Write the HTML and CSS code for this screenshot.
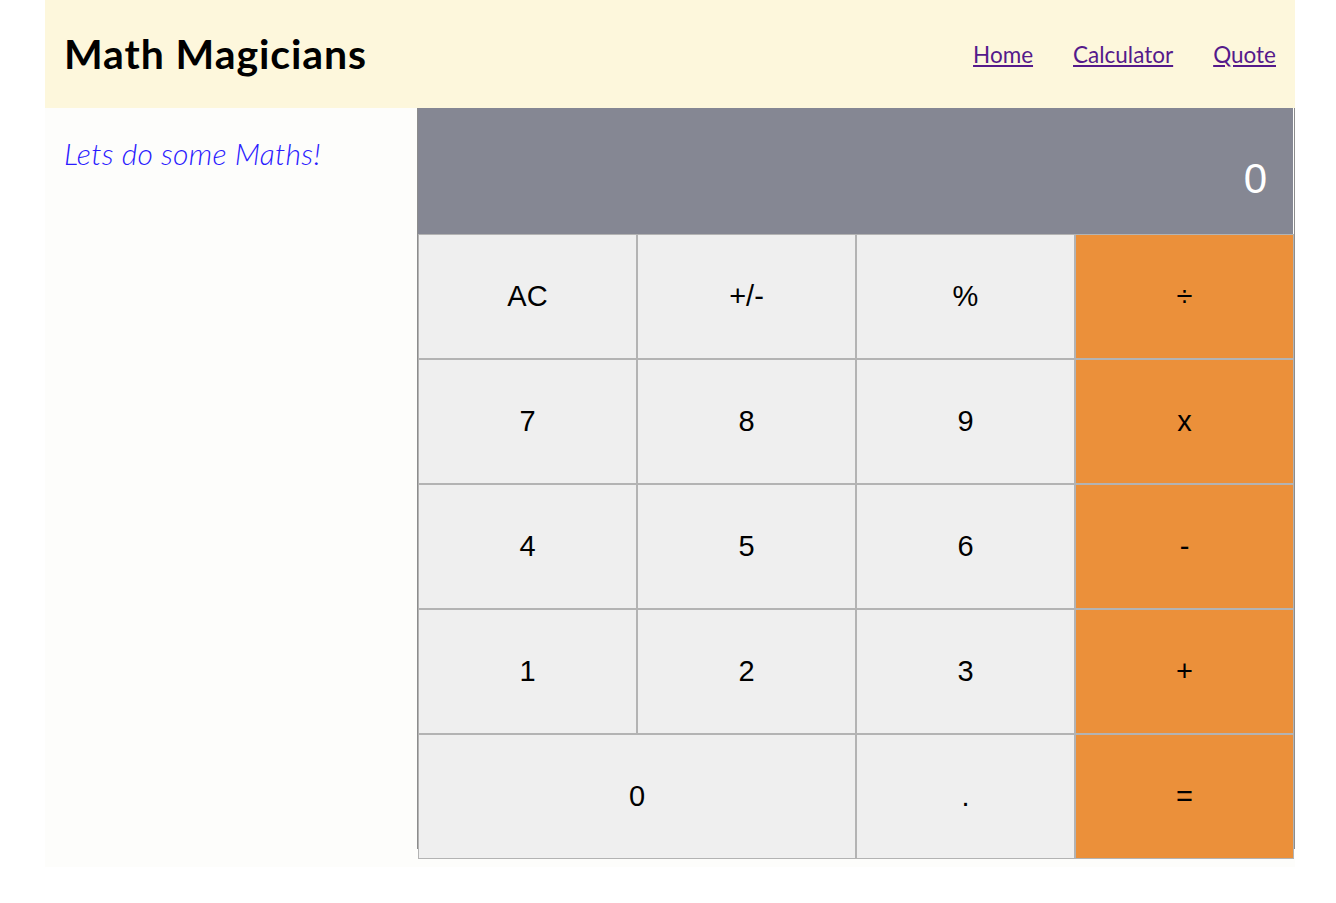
FILE: index.html
```html
<!DOCTYPE html>
<html lang="en">
<head>
<meta charset="utf-8">
<title>Math Magicians</title>
<link rel="stylesheet" href="styles.css">
</head>
<body>
<div class="page">
  <header class="header">
    <h1 class="brand">Math Magicians</h1>
    <nav class="nav">
      <a class="nav-link" href="#home">Home</a>
      <a class="nav-link" href="#calculator">Calculator</a>
      <a class="nav-link" href="#quote">Quote</a>
    </nav>
  </header>
  <main class="main">
    <section class="intro">
      <p class="intro-text">Lets do some Maths!</p>
    </section>
    <section class="calc">
      <div class="display">0</div>
      <div class="keys">
        <button class="key">AC</button>
        <button class="key">+/-</button>
        <button class="key">%</button>
        <button class="key op">÷</button>
        <button class="key">7</button>
        <button class="key">8</button>
        <button class="key">9</button>
        <button class="key op">x</button>
        <button class="key">4</button>
        <button class="key">5</button>
        <button class="key">6</button>
        <button class="key op">-</button>
        <button class="key">1</button>
        <button class="key">2</button>
        <button class="key">3</button>
        <button class="key op">+</button>
        <button class="key wide">0</button>
        <button class="key">.</button>
        <button class="key op">=</button>
      </div>
    </section>
  </main>
</div>
</body>
</html>
```
FILE: styles.css
```css
* { box-sizing: border-box; }

body {
  margin: 0;
  background: #ffffff;
  font-family: "Lato", "Open Sans", sans-serif;
}

.page {
  width: 1250px;
  margin-left: 45px;
}

.header {
  height: 108px;
  background: #fdf7dc;
  display: flex;
  align-items: center;
  justify-content: space-between;
  padding: 0 19px 0 19px;
}

.brand {
  margin: 0;
  font-family: "Lato", sans-serif;
  font-weight: 700;
  font-size: 41px;
  letter-spacing: 0.9px;
  color: #000;
  position: relative;
  top: -1px;
}

.nav {
  display: flex;
  gap: 40px;
}

.nav-link {
  font-size: 22.5px;
  color: #551a8b;
  text-decoration: underline;
}

.main {
  display: flex;
  height: 759px;
  background: #fdfdfb;
}

.intro {
  width: 372px;
  padding: 0 19px;
}

.intro-text {
  margin: 27px 0 0;
  font-size: 30px;
  letter-spacing: 0.3px;
  font-weight: 300;
  font-style: italic;
  color: #2b1bff;
}

.calc {
  width: 878px;
  height: 741px;
  border-left: 1px solid #8c8c8c;
  border-right: 1px solid #8c8c8c;
}

.display {
  height: 126px;
  background: #858793;
  color: #ffffff;
  font-family: "Liberation Sans", Arial, sans-serif;
  font-size: 42px;
  text-align: right;
  padding: 50px 26px 0 0;
  line-height: 1;
  margin-right: 1px;
}

.keys {
  display: grid;
  grid-template-columns: repeat(4, 219px);
  grid-auto-rows: 125px;
}

.key {
  border: 1px solid #b3b3b3;
  background: #efefef;
  font-family: "Liberation Sans", Arial, sans-serif;
  font-size: 29px;
  color: #000;
  padding: 0;
  margin: 0;
}

.key.op {
  background: #eb903a;
}

.key.wide {
  grid-column: span 2;
}
```
